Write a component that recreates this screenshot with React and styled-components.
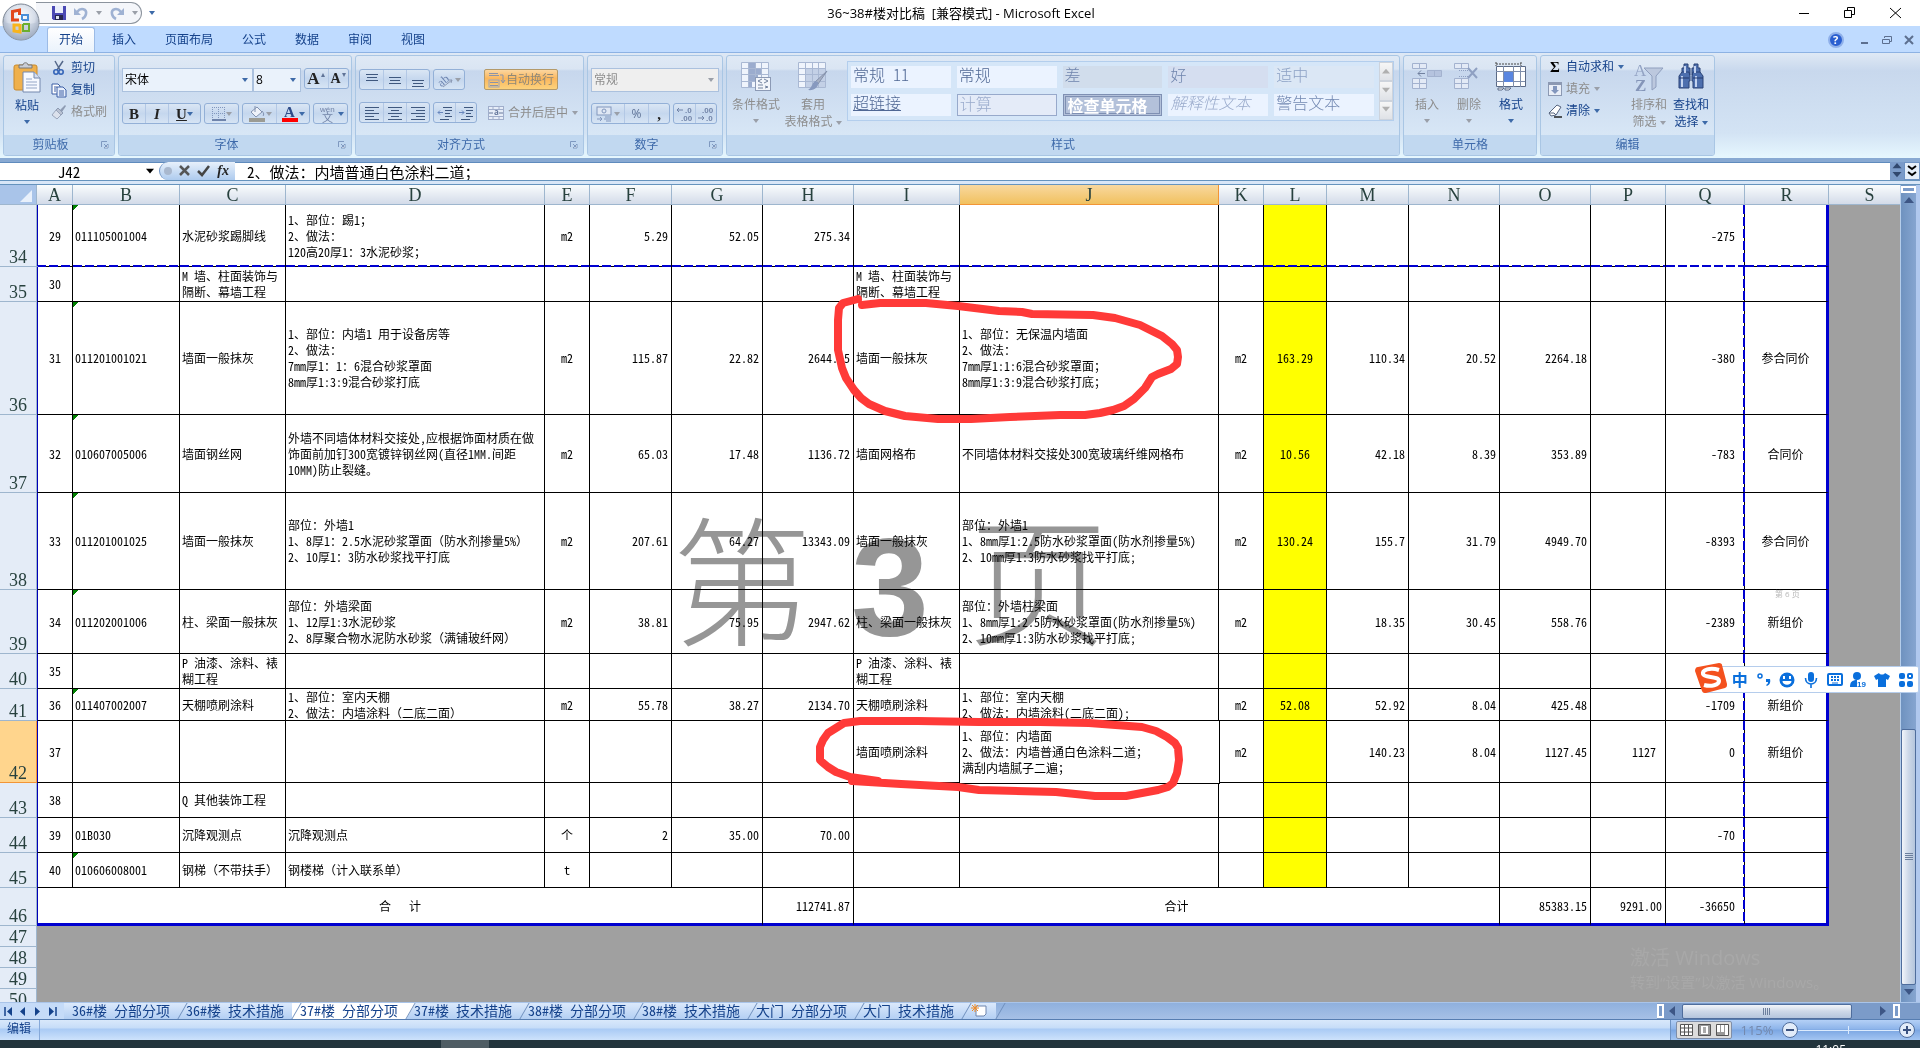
import React, { useState } from "react";
import styled, { createGlobalStyle, css } from "styled-components";

const GlobalStyle = createGlobalStyle`
  * {
    box-sizing: border-box;
  }

  body {
    margin: 0;
    overflow: hidden;
    background: #a0a0a0;
  }

  body, button, input, select {
    font-family: "Open Sans", "Noto Sans CJK SC", sans-serif;
    font-size: 12px;
    line-height: 16px;
  }

  button {
    margin: 0;
    padding: 0;
    border: 0;
    background: none;
    color: inherit;
    white-space: nowrap;
  }

  svg {
    display: block;
    flex: none;
    overflow: visible;
  }
`;

/* half width latin glyphs, two of them are as wide as one chinese glyph */
const gridFont = css`
  font-family: "Noto Sans CJK SC", sans-serif;
  font-feature-settings: "hwid";
  text-spacing-trim: space-all;
`;

/* ---------- sheet data ---------- */

const columns = [
  ["A", 36], ["B", 107], ["C", 106], ["D", 259], ["E", 45], ["F", 82],
  ["G", 91], ["H", 91], ["I", 106], ["J", 259], ["K", 45], ["L", 63],
  ["M", 82], ["N", 91], ["O", 91], ["P", 75], ["Q", 79], ["R", 84],
];

const align = {
  A: "center", B: "left", C: "left", D: "left", E: "center", I: "left",
  J: "left", K: "center", L: "center", R: "center",
};

const rows = [
  {
    n: 34, h: 62, mark: true, brk: true,
    c: {
      A: "29", B: "011105001004", C: "水泥砂浆踢脚线",
      D: "1、部位：踢1；\n2、做法：\n120高20厚1：3水泥砂浆；",
      E: "m2", F: "5.29", G: "52.05", H: "275.34", Q: "-275",
    },
  },
  {
    n: 35, h: 35,
    c: { A: "30", C: "M 墙、柱面装饰与\n隔断、幕墙工程", I: "M 墙、柱面装饰与\n隔断、幕墙工程" },
  },
  {
    n: 36, h: 113, mark: true,
    c: {
      A: "31", B: "011201001021", C: "墙面一般抹灰",
      D: "1、部位：内墙1 用于设备房等\n2、做法：\n7mm厚1：1：6混合砂浆罩面\n8mm厚1:3:9混合砂浆打底",
      E: "m2", F: "115.87", G: "22.82", H: "2644.15", I: "墙面一般抹灰",
      J: "1、部位：无保温内墙面\n2、做法：\n7mm厚1:1:6混合砂浆罩面；\n8mm厚1:3:9混合砂浆打底；",
      K: "m2", L: "163.29", M: "110.34", N: "20.52", O: "2264.18", Q: "-380", R: "参合同价",
    },
  },
  {
    n: 37, h: 78, mark: true,
    c: {
      A: "32", B: "010607005006", C: "墙面钢丝网",
      D: "外墙不同墙体材料交接处,应根据饰面材质在做\n饰面前加钉300宽镀锌钢丝网(直径1MM.间距\n10MM)防止裂缝。",
      E: "m2", F: "65.03", G: "17.48", H: "1136.72", I: "墙面网格布",
      J: "不同墙体材料交接处300宽玻璃纤维网格布",
      K: "m2", L: "10.56", M: "42.18", N: "8.39", O: "353.89", Q: "-783", R: "合同价",
    },
  },
  {
    n: 38, h: 97, mark: true,
    c: {
      A: "33", B: "011201001025", C: "墙面一般抹灰",
      D: "部位：外墙1\n1、8厚1：2.5水泥砂浆罩面（防水剂掺量5%）\n2、10厚1：3防水砂浆找平打底",
      E: "m2", F: "207.61", G: "64.27", H: "13343.09", I: "墙面一般抹灰",
      J: "部位：外墙1\n1、8mm厚1:2.5防水砂浆罩面(防水剂掺量5%)\n2、10mm厚1:3防水砂浆找平打底;",
      K: "m2", L: "130.24", M: "155.7", N: "31.79", O: "4949.70", Q: "-8393", R: "参合同价",
    },
  },
  {
    n: 39, h: 64, mark: true,
    c: {
      A: "34", B: "011202001006", C: "柱、梁面一般抹灰",
      D: "部位：外墙梁面\n1、12厚1:3水泥砂浆\n2、8厚聚合物水泥防水砂浆（满铺玻纤网）",
      E: "m2", F: "38.81", G: "75.95", H: "2947.62", I: "柱、梁面一般抹灰",
      J: "部位：外墙柱梁面\n1、8mm厚1:2.5防水砂浆罩面(防水剂掺量5%)\n2、10mm厚1:3防水砂浆找平打底;",
      K: "m2", M: "18.35", N: "30.45", O: "558.76", Q: "-2389", R: "新组价",
    },
  },
  {
    n: 40, h: 35,
    c: { A: "35", C: "P 油漆、涂料、裱\n糊工程", I: "P 油漆、涂料、裱\n糊工程" },
  },
  {
    n: 41, h: 32, mark: true,
    c: {
      A: "36", B: "011407002007", C: "天棚喷刷涂料",
      D: "1、部位：室内天棚\n2、做法：内墙涂料（二底二面）",
      E: "m2", F: "55.78", G: "38.27", H: "2134.70", I: "天棚喷刷涂料",
      J: "1、部位：室内天棚\n2、做法：内墙涂料(二底二面);",
      K: "m2", L: "52.08", M: "52.92", N: "8.04", O: "425.48", Q: "-1709", R: "新组价",
    },
  },
  {
    n: 42, h: 62, active: true,
    c: {
      A: "37", I: "墙面喷刷涂料",
      J: "1、部位：内墙面\n2、做法：内墙普通白色涂料二道；\n满刮内墙腻子二遍；",
      K: "m2", M: "140.23", N: "8.04", O: "1127.45", P: "1127", Q: "0", R: "新组价",
    },
  },
  { n: 43, h: 35, c: { A: "38", C: "Q 其他装饰工程" } },
  {
    n: 44, h: 35,
    c: { A: "39", B: "01B030", C: "沉降观测点", D: "沉降观测点", E: "个", F: "2", G: "35.00", H: "70.00", Q: "-70" },
  },
  {
    n: 45, h: 35, mark: true,
    c: { A: "40", B: "010606008001", C: "钢梯（不带扶手）", D: "钢楼梯（计入联系单）", E: "t" },
  },
];

const sheetTabs = [
  "36#楼 分部分项", "36#楼 技术措施", "37#楼 分部分项", "37#楼 技术措施",
  "38#楼 分部分项", "38#楼 技术措施", "大门 分部分项", "大门 技术措施",
];

const ribbonTabs = ["开始", "插入", "页面布局", "公式", "数据", "审阅", "视图"];

/* ---------- icons ---------- */

const BLUE = "#8297bd";
const INK = "#3f587e";

const OfficeLogo = () => (
  <svg width="38" height="38" viewBox="0 0 38 38">
    <defs>
      <radialGradient id="orb" cx="50%" cy="35%" r="65%">
        <stop offset="0" stopColor="#ffffff" />
        <stop offset="0.6" stopColor="#d5dce8" />
        <stop offset="1" stopColor="#8593ab" />
      </radialGradient>
    </defs>
    <circle cx="19" cy="19" r="18" fill="url(#orb)" stroke="#7d8794" />
    <path d="M1 19a18 18 0 0 0 36 0c-8 3-28 3-36 0z" fill="#b4bfd2" opacity="0.5" />
    <g fill="none" strokeWidth="3">
      <path d="M17 17h-6.500v-8.500l7-1.500v5" stroke="#e2471b" />
      <path d="M18 21v8l-6-1v-6h6z" stroke="#f9b41c" />
    </g>
    <g fill="none" strokeWidth="2">
      <path d="M20 17h6v-5h-6v5" stroke="#4a8fd8" />
      <path d="M21 21h6v7h-6v-7" stroke="#6cae2e" />
    </g>
  </svg>
);

const SaveIcon = () => (
  <svg width="14" height="14" viewBox="0 0 14 14">
    <path d="M0 0h14v14H1.500L0 12.500z" fill="#4b49b4" />
    <path d="M3 0h8v7H3z" fill="#e9edfb" />
    <path d="M3 9h8v5H3z" fill="#26264e" />
    <path d="M4 10h3v3H4z" fill="#dfe4f0" />
  </svg>
);

const UndoIcon = ({ flip }) => (
  <svg width="14" height="14" viewBox="0 0 14 14">
    <g transform={flip ? "translate(14 0) scale(-1 1)" : undefined}>
      <path d="M3 6c4-5 10-3 9 2-.5 2.500-2 4-4 5" fill="none" stroke="#9fb2d3" strokeWidth="2.600" />
      <path d="M0 2v7h7z" fill="#9fb2d3" />
    </g>
  </svg>
);

const PasteIcon = () => (
  <svg width="28" height="32" viewBox="0 0 28 32">
    <rect x="1" y="3" width="23" height="25" rx="2" fill="#efb04c" stroke="#c98a2c" />
    <path d="M6 6V3h4c0-3 5-3 5 0h4v3z" fill="#c9cdd6" stroke="#777" />
    <path d="M10 10h11l6 6v14H10z" fill="#f6f9ff" stroke="#7588ad" />
    <path d="M21 10v6h6" fill="#d4def0" stroke="#7588ad" />
    <path d="M13 17h6M13 20h11M13 23h11M13 26h11" stroke="#93a5c6" />
  </svg>
);

const CutIcon = () => (
  <svg width="16" height="16" viewBox="0 0 16 16">
    <path d="M4 1l5 9M12 1L6 10" stroke="#55688a" strokeWidth="1.500" fill="none" />
    <circle cx="5" cy="12" r="2.200" fill="none" stroke="#3565b8" strokeWidth="1.600" />
    <circle cx="10" cy="12" r="2.200" fill="none" stroke="#3565b8" strokeWidth="1.600" />
  </svg>
);

const CopyIcon = () => (
  <svg width="16" height="16" viewBox="0 0 16 16">
    <path d="M1 2h6l2 2v8H1z" fill="#fff" stroke="#3d5fa5" />
    <path d="M6 5h6l3 3v7H6z" fill="#e6eefc" stroke="#3d5fa5" />
    <path d="M8 9h5M8 11h5M8 13h5M3 5h3M3 7h2M3 9h2" stroke="#3d5fa5" />
  </svg>
);

const BrushIcon = () => (
  <svg width="16" height="16" viewBox="0 0 16 16">
    <path d="M14 1l1 1-4 6-2-2z" fill="#8e9bb3" />
    <path d="M7 4l5 5-2 2-5-5z" fill="#b8c1d2" stroke="#8e9bb3" />
    <path d="M5 6l5 5-4 4-5-4z" fill="#dbe1ec" stroke="#9aa6bc" />
  </svg>
);

/* text lines of the given widths, stacked from top */
const LinesIcon = ({ widths, side = "left", top = 2, gap = 3 }) => (
  <svg width="16" height="16" viewBox="0 0 16 16">
    {widths.map((w, i) => {
      const x = side === "left" ? 1 : side === "right" ? 15 - w : (16 - w) / 2;
      return <rect key={i} x={x} y={top + i * gap} width={w} height="1" fill={INK} />;
    })}
  </svg>
);

const OrientIcon = () => (
  <svg width="18" height="16" viewBox="0 0 18 16">
    <text x="1" y="12" fontSize="12" fill="#6d84b0" transform="rotate(-40 7 9)" fontFamily="Liberation Serif">ab</text>
    <path d="M6 15l9-7m0 0l-3 0m3 0l-1 3" stroke="#8d9bb5" fill="none" />
  </svg>
);

const IndentIcon = ({ out }) => (
  <svg width="16" height="16" viewBox="0 0 16 16">
    <path d="M6 2.500h9M8 5.500h7M8 8.500h5M8 11.500h7M3 14.500h9" stroke={INK} />
    <path d={out ? "M6 7.500H1m2-2L1 7.500l2 2" : "M1 7.500h5m-2-2l2 2-2 2"} stroke="#6786bd" fill="none" />
  </svg>
);

const WrapIcon = () => (
  <svg width="18" height="16" viewBox="0 0 18 16">
    <path d="M1 3.500h10M1 1.500h9M2 10.500h8M2 13.500h8" stroke="#8b93a8" />
    <rect x="1" y="8" width="10" height="7" fill="none" stroke="#9aa4bb" />
    <path d="M12 3h3v7m-2-2l2 3 2-3" stroke="#8b93a8" fill="none" />
  </svg>
);

const MergeIcon = () => (
  <svg width="16" height="14" viewBox="0 0 16 14">
    <rect x="0.500" y="0.500" width="15" height="13" fill="#e6edf8" stroke="#a0aecb" />
    <path d="M5 0v3M11 0v3M5 11v3M11 11v3M0 3.500h16M0 10.500h16" stroke="#a0aecb" />
    <text x="6" y="9" fontSize="8" fontWeight="bold" fill="#66789c">a</text>
    <path d="M1 7h4M11 7h4" stroke="#66789c" />
  </svg>
);

const BorderIcon = () => (
  <svg width="14" height="14" viewBox="0 0 14 14">
    <path d="M0.500 0v13M6.500 0v13M12.500 0v13M0 0.500h13M0 6.500h13" stroke={BLUE} strokeDasharray="1 1" />
    <path d="M0 13h14" stroke="#6f84ab" strokeWidth="2" />
  </svg>
);

const FillIcon = () => (
  <svg width="18" height="18" viewBox="0 0 18 18">
    <path d="M3 7l6-5 5 5-6 5z" fill="#eef2f9" stroke="#8292b0" />
    <path d="M7 1v6M14 6c2 2 2 4 1 5" stroke="#8292b0" fill="none" />
    <rect x="1" y="13" width="16" height="4" fill="#9b9b93" />
  </svg>
);

const FontColorIcon = () => (
  <svg width="18" height="18" viewBox="0 0 18 18">
    <text x="3" y="12" fontSize="15" fontWeight="bold" fill="#2f4c8a" fontFamily="Liberation Serif">A</text>
    <rect x="1" y="13" width="16" height="4" fill="#f00" />
  </svg>
);

const PinyinIcon = () => (
  <svg width="20" height="20" viewBox="0 0 20 20">
    <text x="2" y="8" fontSize="8" fill="#7284a8" fontFamily="Liberation Sans">wén</text>
    <text x="4" y="18" fontSize="11" fill="#7284a8" fontFamily="Noto Sans CJK SC">文</text>
  </svg>
);

const CoinIcon = () => (
  <svg width="18" height="16" viewBox="0 0 18 16">
    <rect x="1" y="1" width="14" height="8" fill="#dfe7f4" stroke={BLUE} />
    <circle cx="8" cy="5" r="2" fill="none" stroke={BLUE} />
    <path d="M9 11h6M8 13h7M10 15h5M1 13h5m-2-2l2 2-2 2" stroke={BLUE} fill="none" />
  </svg>
);

const DecimalIcon = ({ less }) => (
  <svg width="18" height="16" viewBox="0 0 18 16">
    <g fontSize="8" fontWeight="bold" fill="#7184a8" fontFamily="Liberation Sans">
      <text x={less ? 5 : 9} y="7">{less ? ".00" : ".0"}</text>
      <text x={less ? 9 : 5} y="15">{less ? ".0" : ".00"}</text>
    </g>
    <path d={less ? "M1 12h6m-2-2l2 2-2 2" : "M7 4H1m2-2L1 4l2 2"} stroke="#7184a8" fill="none" />
  </svg>
);

const CondIcon = () => (
  <svg width="30" height="30" viewBox="0 0 30 30">
    <path d="M0.500 0.500h27v25h-27z" fill="#eff4fc" stroke="#a9b8d3" />
    <path d="M7 1h7v6H7zM7 7h13v6H7zM7 13h10v6H7zM7 19h4v6H7z" fill="#9bacce" />
    <path d="M7.500 0v25M14.500 0v25M20.500 0v25M0 6.500h27M0 12.500h27M0 19.500h27" stroke="#a9b8d3" />
    <rect x="14.500" y="15.500" width="15" height="13" fill="#f3f6fb" stroke="#8c9ab5" />
    <path d="M21 17l-4 2 4 2M23 17l4 2-4 2M17 23h5M17 26h5M24 24l3 1-3 1" stroke="#73839f" fill="none" />
  </svg>
);

const TableFmtIcon = () => (
  <svg width="30" height="30" viewBox="0 0 30 30">
    <path d="M0.500 0.500h27v25h-27z" fill="#eff4fc" stroke="#a9b8d3" />
    <path d="M7 7h20v18H7z" fill="#c3d0e6" />
    <path d="M7.500 0v25M14.500 0v25M20.500 0v25M0 6.500h27M0 12.500h27M0 19.500h27" stroke="#a9b8d3" />
    <path d="M29 9l-9 13-3-2z" fill="#a8b2c6" stroke="#8491ab" />
    <path d="M20 20c1 5-4 9-10 8 4-2 4-7 7-9z" fill="#8799bf" />
  </svg>
);

const InsertIcon = ({ del }) => (
  <svg width="32" height="30" viewBox="0 0 32 30">
    <g fill="#e3eaf6" stroke="#a3b2cf">
      <path d="M1.500 1.500h14v5h-14zM1.500 16.500h14v10h-14zM1.500 21.500h14M8.500 1.500v5M8.500 16.500v10" />
      {!del && <path d="M16.500 8.500h14v6h-14zM23.500 8.500v6" fill="#b5c3de" />}
    </g>
    {del ? (
      <g stroke="#8fa0c2" fill="none">
        <path d="M6 8.500h12M6 14.500h12" strokeDasharray="1 1" />
        <path d="M15 6l9 10M24 6l-9 10" strokeWidth="2" />
      </g>
    ) : (
      <path d="M14 11.500H7m3-3l-3 3 3 3" stroke="#71819f" fill="none" />
    )}
  </svg>
);

const FormatIcon = () => (
  <svg width="32" height="30" viewBox="0 0 32 30">
    <path d="M1 0v4M26 0v4M1 2h25" stroke="#444" strokeDasharray="2 1" fill="none" />
    <path d="M1.500 4.500h29v20h-29z" fill="#fff" stroke="#5b6a86" />
    <path d="M8.500 4v21M18.500 4v21M25.500 4v21M1 9.500h29M1 19.500h29" stroke="#7f8eab" />
    <path d="M9 10h9v10H9z" fill="#5a86e0" />
    <path d="M3 26h6l-2 2H3zM10 26h6l-2 2h-4z" fill="#fff" stroke="#5b6a86" />
  </svg>
);

const FillDownIcon = () => (
  <svg width="14" height="16" viewBox="0 0 14 16">
    <rect x="0.500" y="1.500" width="13" height="13" fill="#e9eef7" stroke="#8c99b3" />
    <path d="M0 3h14" stroke="#8c99b3" strokeWidth="2" />
    <path d="M5 5h4v4h2l-4 4-4-4h2z" fill="#8296bd" />
  </svg>
);

const EraseIcon = () => (
  <svg width="14" height="16" viewBox="0 0 14 16">
    <path d="M9 2l4 2-5 8-5 1-2-3z" fill="#fff" stroke="#56647f" />
    <path d="M1 10l5 0 2 2" stroke="#56647f" fill="none" />
    <path d="M6 14h8" stroke="#222" strokeWidth="1.500" />
  </svg>
);

const SortIcon = () => (
  <svg width="30" height="30" viewBox="0 0 30 30">
    <text x="0" y="14" fontSize="17" fill="#93a3c4" fontFamily="Liberation Serif">A</text>
    <text x="1" y="29" fontSize="17" fontWeight="bold" fill="#8495b8" fontFamily="Liberation Serif">Z</text>
    <path d="M10 6h19l-7 8v11l-4 3V14z" fill="#bcc8de" stroke="#8f9fbe" />
  </svg>
);

const FindIcon = () => (
  <svg width="30" height="30" viewBox="0 0 30 30">
    <g fill="#4d6fae" stroke="#2a4377">
      <path d="M8 2h4v4h2v7H6V6h2zM18 2h4v4h2v7h-8V6h2z" />
      <path d="M3 14l3-4h7l1 4v5h-1v7H3zM27 14l-3-4h-7l-1 4v5h1v7h10z" />
    </g>
    <path d="M6 14v11M20 14v11M9 4v7M19 4v7" stroke="#c3d3f0" strokeWidth="2" />
    <path d="M3 16h10M17 16h10" stroke="#23396a" />
  </svg>
);

const LaunchIcon = () => (
  <svg width="8" height="8" viewBox="0 0 8 8">
    <path d="M0.500 6V0.500H6" stroke="#7f99c0" fill="none" />
    <path d="M3 3l3 3M7 3v4H3z" stroke="#7f99c0" fill="#fff" />
  </svg>
);

const Arrow = ({ dir = "left", color = "#45659b" }) => {
  const d = {
    left: "M7 0v10L1 5z", right: "M1 0v10l6-5z", up: "M0 7h10L5 1z", down: "M0 1h10L5 7z",
  }[dir];
  return (
    <svg width="10" height="10" viewBox="0 0 10 10">
      <path d={d} fill={color} />
    </svg>
  );
};

/* ---------- components ---------- */

const Drop = ({ on }) => <Caret $on={on} />;

const Group = ({ title, width, launch, children, pad }) => (
  <GroupBox $w={width}>
    <GroupBody $pad={pad}>{children}</GroupBody>
    <GroupTitle>
      <span>{title}</span>
      {launch && <button aria-label={`${title} 设置`}><LaunchIcon /></button>}
    </GroupTitle>
  </GroupBox>
);

const Pick = ({ label, value, width, off }) => (
  <PickWrap $w={width} $off={off}>
    <select aria-label={label} defaultValue={value} disabled={off}>
      <option>{value}</option>
    </select>
    <Drop on={!off} />
  </PickWrap>
);

const Ribbon = () => (
  <RibbonBar>
    <Group title="剪贴板" width={112} launch pad="1px 0 0 3px">
      <BigButton $on $w={40}>
        <PasteIcon />
        <span>粘贴</span>
        <Drop on />
      </BigButton>
      <Column>
        <SmallButton $on><CutIcon />剪切</SmallButton>
        <SmallButton $on><CopyIcon />复制</SmallButton>
        <SmallButton><BrushIcon />格式刷</SmallButton>
      </Column>
    </Group>

    <Group title="字体" width={234} launch pad="12px 3px 0">
      <Column $gap={11}>
        <ToolRow $h={24}>
          <Joined>
            <Pick label="字体" value="宋体" width={131} />
            <Pick label="字号" value="8" width={48} />
          </Joined>
          <Tools>
            <Tool $w={23} aria-label="增大字号"><Glyph $s={17}>A</Glyph><Tick>▴</Tick></Tool>
            <Tool $w={20} aria-label="减小字号"><Glyph $s={14}>A</Glyph><Tick>▾</Tick></Tool>
          </Tools>
        </ToolRow>
        <ToolRow>
          <Tools>
            <Tool $w={22}><Glyph $s={15}>B</Glyph></Tool>
            <Tool $w={23}><Glyph $s={15} $i>I</Glyph></Tool>
            <Tool $w={32}><Glyph $s={15} $u>U</Glyph><Drop on /></Tool>
          </Tools>
          <Tools>
            <Tool $w={33} aria-label="边框"><BorderIcon /><Drop /></Tool>
          </Tools>
          <Tools>
            <Tool $w={33} aria-label="填充颜色"><FillIcon /><Drop /></Tool>
            <Tool $w={33} aria-label="字体颜色"><FontColorIcon /><Drop on /></Tool>
          </Tools>
          <Tools>
            <Tool $w={33} aria-label="拼音"><PinyinIcon /><Drop on /></Tool>
          </Tools>
        </ToolRow>
      </Column>
    </Group>

    <Group title="对齐方式" width={229} launch pad="13px 3px 0">
      <Column $gap={12}>
        <ToolRow>
          <Tools>
            <Tool $w={23} aria-label="顶端对齐"><LinesIcon widths={[12, 10, 12]} side="center" top={2} /></Tool>
            <Tool $w={23} aria-label="垂直居中"><LinesIcon widths={[12, 10, 12]} side="center" top={5} /></Tool>
            <Tool $w={23} aria-label="底端对齐"><LinesIcon widths={[12, 10, 12]} side="center" top={8} /></Tool>
          </Tools>
          <Tools>
            <Tool $w={30} aria-label="方向"><OrientIcon /><Drop /></Tool>
          </Tools>
        </ToolRow>
        <ToolRow>
          <Tools>
            <Tool $w={23} aria-label="文本左对齐"><LinesIcon widths={[14, 9, 14, 9, 14]} /></Tool>
            <Tool $w={23} aria-label="居中"><LinesIcon widths={[14, 8, 14, 8, 14]} side="center" /></Tool>
            <Tool $w={23} aria-label="文本右对齐"><LinesIcon widths={[14, 9, 14, 9, 14]} side="right" /></Tool>
          </Tools>
          <Tools>
            <Tool $w={21} aria-label="减少缩进量"><IndentIcon out /></Tool>
            <Tool $w={21} aria-label="增加缩进量"><IndentIcon /></Tool>
          </Tools>
        </ToolRow>
      </Column>
      <Rule />
      <Column $gap={12}>
        <WrapButton><WrapIcon />自动换行</WrapButton>
        <SmallButton><MergeIcon />合并后居中<Drop /></SmallButton>
      </Column>
    </Group>

    <Group title="数字" width={136} launch pad="12px 3px 0">
      <Column $gap={11}>
        <ToolRow $h={24}>
          <Pick label="数字格式" value="常规" width={128} off />
        </ToolRow>
        <ToolRow>
          <Tools>
            <Tool $w={32} aria-label="会计数字格式"><CoinIcon /><Drop /></Tool>
            <Tool $w={24}>%</Tool>
            <Tool $w={21}><Glyph $s={15}>,</Glyph></Tool>
          </Tools>
          <Tools>
            <Tool $w={21} aria-label="增加小数位数"><DecimalIcon /></Tool>
            <Tool $w={21} aria-label="减少小数位数"><DecimalIcon less /></Tool>
          </Tools>
        </ToolRow>
      </Column>
    </Group>

    <Group title="样式" width={674} pad="0 5px 0 2px">
      <BigButton $w={54}>
        <CondIcon />
        <span>条件格式</span>
        <Drop />
      </BigButton>
      <BigButton $w={60}>
        <TableFmtIcon />
        <span>套用</span>
        <span>表格格式 <Drop /></span>
      </BigButton>
      <Gallery>
        <GalleryGrid>
          <Swatch $fg="#4f6794">常规 11</Swatch>
          <Swatch $fg="#4f6794">常规</Swatch>
          <Swatch $fg="#6f84ac" $bg="#d1ddec">差</Swatch>
          <Swatch $fg="#6f84ac" $bg="#d5def0">好</Swatch>
          <Swatch $fg="#8ba0c4" $bg="#dbe7f5">适中</Swatch>
          <Swatch $fg="#4f6794" $line>超链接</Swatch>
          <Swatch $fg="#9aabcc" $bg="#e4ebf8" $edge="1px solid #97a9cb">计算</Swatch>
          <Swatch $fg="#ffffff" $bg="#b3c1da" $edge="3px double #7f90b3" $bold>检查单元格</Swatch>
          <Swatch $fg="#9aabcc" $slant>解释性文本</Swatch>
          <Swatch $fg="#7288b2">警告文本</Swatch>
        </GalleryGrid>
        <GalleryScroll>
          <button aria-label="上一行"><Arrow dir="up" color="#b0b0b0" /></button>
          <button aria-label="下一行"><Arrow dir="down" color="#b0b0b0" /></button>
          <button aria-label="其他"><Arrow dir="down" color="#b0b0b0" /></button>
        </GalleryScroll>
      </Gallery>
    </Group>

    <Group title="单元格" width={134} pad="0 0 0 2px">
      <BigButton $w={42}><InsertIcon /><span>插入</span><Drop /></BigButton>
      <BigButton $w={42}><InsertIcon del /><span>删除</span><Drop /></BigButton>
      <BigButton $w={42} $on><FormatIcon /><span>格式</span><Drop on /></BigButton>
    </Group>

    <Group title="编辑" width={175} pad="0 0 0 3px">
      <Column>
        <SmallButton $on><Sigma>Σ</Sigma>自动求和<Drop on /></SmallButton>
        <SmallButton><FillDownIcon />填充<Drop /></SmallButton>
        <SmallButton $on><EraseIcon />清除<Drop on /></SmallButton>
      </Column>
      <BigButton $w={42}>
        <SortIcon />
        <span>排序和</span>
        <span>筛选 <Drop /></span>
      </BigButton>
      <BigButton $w={42} $on>
        <FindIcon />
        <span>查找和</span>
        <span>选择 <Drop on /></span>
      </BigButton>
    </Group>
  </RibbonBar>
);

/* brackets that are typed full width keep the full width glyph */
const withWide = (text = "") =>
  text.split(/([（）])/).map((part, i) => (i % 2 ? <Wide key={i}>{part}</Wide> : part));

const SheetRow = ({ row }) => (
  <tr>
    <RowHead scope="row" $h={row.h} $on={row.active}>{row.n}</RowHead>
    {columns.map(([name]) => (
      <Cell
        key={name}
        $col={name}
        $align={align[name] || "right"}
        $mark={row.mark && name === "B"}
        $brk={row.brk}
        $edit={row.active && name === "J"}
      >
        <CellText $h={row.h}>{withWide(row.c[name])}</CellText>
      </Cell>
    ))}
    <Blank />
  </tr>
);

const Sheet = () => (
  <SheetArea>
    <GridPane>
      <Table>
        <colgroup>
          <col style={{ width: 37 }} />
          {columns.map(([name, w]) => <col key={name} style={{ width: w }} />)}
          <col />
        </colgroup>
        <thead>
          <tr>
            <Corner aria-label="全选">
              <svg width="36" height="18" viewBox="0 0 36 18">
                <path d="M32 4v12H20z" fill="#e8f0fb" />
              </svg>
            </Corner>
            {columns.map(([name]) => (
              <ColHead key={name} scope="col" $on={name === "J"}>{name}</ColHead>
            ))}
            <ColHead scope="col" $open>S</ColHead>
          </tr>
        </thead>
        <tbody>
          {rows.map((row) => <SheetRow key={row.n} row={row} />)}
          <tr>
            <RowHead scope="row" $h={38}>46</RowHead>
            <Cell colSpan={7} $col="A" $align="center" $last><CellText $h={38}>合   计</CellText></Cell>
            <Cell $col="H" $align="right" $last><CellText $h={38}>112741.87</CellText></Cell>
            <Cell colSpan={6} $col="N" $align="center" $last><CellText $h={38}>合计</CellText></Cell>
            <Cell $col="O" $align="right" $last><CellText $h={38}>85383.15</CellText></Cell>
            <Cell $col="O" $align="right" $last><CellText $h={38}>9291.00</CellText></Cell>
            <Cell $col="Q" $align="right" $last><CellText $h={38}>-36650</CellText></Cell>
            <Cell $col="R" $align="center" $last />
            <Blank />
          </tr>
          {[47, 48, 49, 50].map((n) => (
            <tr key={n}>
              <RowHead scope="row" $h={21}>{n}</RowHead>
              <Blank colSpan={19} />
            </tr>
          ))}
        </tbody>
      </Table>
      <PageMark>
        <span>第</span>
        <b>3</b>
        <span>页</span>
      </PageMark>
      <TinyMark>第 6 页</TinyMark>
      <Activate>
        <strong>激活 Windows</strong>
        <span>转到“设置”以激活 Windows。</span>
      </Activate>
      <Ink />
    </GridPane>
    <VScroll>
      <SplitHandle />
      <Arrow dir="up" color="#3d5685" />
      <VTrack>
        <VThumb><i /><i /><i /><i /></VThumb>
      </VTrack>
      <Arrow dir="down" color="#3d5685" />
    </VScroll>
  </SheetArea>
);

/* freehand pen marks, drawn in window coordinates */
const Ink = () => (
  <InkLayer viewBox="0 185 1900 817">
    <polyline points="862,305 880,303 926,303 958,306 999,311 1022,312 1032,314 1093,315 1115,318 1140,325 1162,336 1172,344 1177,350 1178,357 1177,364 1171,369 1158,374 1152,377 1145,388 1134,399 1124,406 1113,410 1100,413 1085,415 1060,415 1010,417 971,419 938,419 905,416 885,411 869,404 861,398 854,390 846,378 842,368 838,350 838,320 839,308 843,303 858,299" />
    <polyline points="878,781 850,777 836,772 828,767 822,762 820,760 820,747 823,740 828,733 844,723 860,721 918,721 979,722 1040,722 1089,723 1142,727 1156,731 1167,737 1175,743 1178,748 1179,760 1177,773 1173,783 1168,787 1158,790 1126,796 1095,796 1056,792 979,790 958,787 901,784 852,781" />
  </InkLayer>
);

const ImeBar = () => (
  <Ime>
    <svg width="34" height="32" viewBox="0 0 34 32">
      <path d="M4 5L25 1c2 0 3 1 3 2l5 19c0 2 0 3-2 4L12 31c-2 0-3 0-4-2L1 9c0-2 1-4 3-4z" fill="#f4511e" />
      <path d="M25 8c-9-3-17 0-16 4 1 4 16 2 16 7 0 4-8 6-15 4" fill="none" stroke="#fff" strokeWidth="4" />
    </svg>
    <ImeButton>中</ImeButton>
    <ImeButton aria-label="标点">
      <svg width="16" height="18" viewBox="0 0 16 18">
        <circle cx="4" cy="5" r="2" fill="none" stroke="#0a6fdc" strokeWidth="1.500" />
        <path d="M10 8h4c1 4-1 6-3 7l-1-1c1-1 2-1 2-3h-2z" fill="#0a6fdc" />
      </svg>
    </ImeButton>
    <ImeButton aria-label="表情">
      <svg width="16" height="18" viewBox="0 0 16 18">
        <circle cx="8" cy="9" r="7.500" fill="#0a6fdc" />
        <path d="M5 5v3M11 5v3" stroke="#fff" strokeWidth="2" />
        <path d="M3.500 10h9c0 5-9 5-9 0z" fill="#fff" />
      </svg>
    </ImeButton>
    <ImeButton aria-label="语音">
      <svg width="16" height="18" viewBox="0 0 16 18">
        <rect x="5" y="1" width="6" height="10" rx="3" fill="#0a6fdc" />
        <path d="M2.500 7c0 8 11 8 11 0M8 13v4" stroke="#0a6fdc" strokeWidth="1.600" fill="none" />
      </svg>
    </ImeButton>
    <ImeButton aria-label="键盘">
      <svg width="16" height="18" viewBox="0 0 16 18">
        <rect x="1" y="3" width="14" height="11" rx="1" fill="none" stroke="#0a6fdc" strokeWidth="2" />
        <path d="M4 6h9M4 9h9" stroke="#0a6fdc" strokeWidth="2" strokeDasharray="2 1" />
        <path d="M5 12h6" stroke="#0a6fdc" />
      </svg>
    </ImeButton>
    <ImeButton aria-label="账户">
      <svg width="17" height="18" viewBox="0 0 17 18">
        <circle cx="7" cy="5" r="4" fill="#0a6fdc" />
        <path d="M0 16c0-5 2-7 7-7s7 3 7 7z" fill="#0a6fdc" />
        <rect x="7" y="9" width="10" height="8" fill="#fff" />
        <text x="7" y="16" fontSize="8" fontWeight="bold" fill="#0a6fdc" fontFamily="Liberation Sans">19</text>
      </svg>
    </ImeButton>
    <ImeButton aria-label="皮肤">
      <svg width="16" height="18" viewBox="0 0 16 18">
        <path d="M5 2c1 2 5 2 6 0l5 3-2 4-2-1v8H4V8L2 9 0 5z" fill="#0a6fdc" />
      </svg>
    </ImeButton>
    <ImeButton aria-label="工具箱">
      <svg width="14" height="14" viewBox="0 0 14 14">
        <rect x="0" y="0" width="6" height="6" rx="2" fill="#0a6fdc" />
        <rect x="9" y="1" width="4" height="4" rx="1" fill="none" stroke="#0a6fdc" strokeWidth="2" />
        <rect x="0" y="8" width="6" height="6" rx="2" fill="#0a6fdc" />
        <rect x="8" y="8" width="6" height="6" rx="2" fill="#0a6fdc" />
      </svg>
    </ImeButton>
  </Ime>
);

const App = () => {
  const [sheet, setSheet] = useState(2);
  const [formula, setFormula] = useState("2、做法：内墙普通白色涂料二道；");

  return (
    <Window>
      <GlobalStyle />
      <TitleBar>
        <QuickBar>
          <button aria-label="保存"><SaveIcon /></button>
          <button aria-label="撤消"><UndoIcon /></button>
          <Drop />
          <button aria-label="恢复"><UndoIcon flip /></button>
          <Drop />
        </QuickBar>
        <Drop on />
        <Title>36~38#楼对比稿&nbsp; [兼容模式] - Microsoft Excel</Title>
        <WindowButtons>
          <button aria-label="最小化"><svg width="10" height="12"><path d="M0 6.500h10" stroke="#000" /></svg></button>
          <button aria-label="还原">
            <svg width="11" height="12"><path d="M0.500 3.500h7v7h-7zM3.500 3V0.500h7v7H8" fill="none" stroke="#000" /></svg>
          </button>
          <button aria-label="关闭"><svg width="11" height="12"><path d="M0 1l11 10M11 1L0 11" stroke="#000" /></svg></button>
        </WindowButtons>
        <OfficeButton aria-label="Office 按钮"><OfficeLogo /></OfficeButton>
      </TitleBar>

      <TabStrip>
        {ribbonTabs.map((t, i) => <RibbonTab key={t} $on={i === 0}>{t}</RibbonTab>)}
        <BookButtons>
          <button aria-label="帮助">
            <svg width="16" height="16">
              <circle cx="8" cy="8" r="7" fill="#2a5fd0" stroke="#8fb0ea" strokeWidth="2" />
              <text x="5" y="12" fontSize="11" fontWeight="bold" fill="#fff">?</text>
            </svg>
          </button>
          <button aria-label="最小化工作簿"><svg width="10" height="12"><path d="M1 9h7" stroke="#5c6f8f" strokeWidth="2" /></svg></button>
          <button aria-label="还原工作簿">
            <svg width="10" height="12"><path d="M2.500 4V2.500h7v5H8M0.500 5.500h7v4h-7z" fill="none" stroke="#5c6f8f" /></svg>
          </button>
          <button aria-label="关闭工作簿"><svg width="10" height="12"><path d="M1 2l8 8M9 2l-8 8" stroke="#5c6f8f" strokeWidth="2" /></svg></button>
        </BookButtons>
      </TabStrip>

      <Ribbon />

      <FormulaBar>
        <NameBox>
          <input aria-label="名称框" defaultValue="J42" />
          <Arrow dir="down" color="#000" />
        </NameBox>
        <FormulaTools>
          <i />
          <button aria-label="取消"><svg width="11" height="12"><path d="M1 1l9 9M10 1l-9 9" stroke="#555" strokeWidth="2.500" /></svg></button>
          <button aria-label="输入"><svg width="13" height="12"><path d="M1 6l4 4 7-9" fill="none" stroke="#444" strokeWidth="2.500" /></svg></button>
          <button aria-label="插入函数"><Glyph $s={14} $i>fx</Glyph></button>
        </FormulaTools>
        <FormulaInput aria-label="编辑栏" value={formula} onChange={(e) => setFormula(e.target.value)} />
        <Stepper>
          <Arrow dir="up" color="#31486f" />
          <Arrow dir="down" color="#31486f" />
        </Stepper>
        <Expand aria-label="展开编辑栏">
          <svg width="10" height="12"><path d="M1 1l4 3 4-3M1 7l4 3 4-3" fill="none" stroke="#000" strokeWidth="2" /></svg>
        </Expand>
      </FormulaBar>

      <Sheet />

      <SheetBar>
        <SheetNav>
          <button aria-label="第一张"><svg width="9" height="9"><path d="M1 0v9" stroke="#15428b" strokeWidth="1.500" /><path d="M8 0v9L3 4.500z" fill="#15428b" /></svg></button>
          <button aria-label="上一张"><svg width="9" height="9"><path d="M6 0v9L1 4.500z" fill="#15428b" /></svg></button>
          <button aria-label="下一张"><svg width="9" height="9"><path d="M2 0v9l5-4.500z" fill="#15428b" /></svg></button>
          <button aria-label="最后一张"><svg width="9" height="9"><path d="M8 0v9" stroke="#15428b" strokeWidth="1.500" /><path d="M1 0v9l5-4.500z" fill="#15428b" /></svg></button>
        </SheetNav>
        <SheetTabs>
          {sheetTabs.map((t, i) => (
            <SheetTab key={t} $on={i === sheet} onClick={() => setSheet(i)}>{t}</SheetTab>
          ))}
          <SheetTab aria-label="插入工作表">
            <svg width="18" height="14">
              <path d="M6 3h10v8l-2 2H6z" fill="#fff" stroke="#6c84ad" />
              <path d="M5 1v8M1 5h8M2 2l6 6M8 2L2 8" stroke="#f08a24" />
            </svg>
          </SheetTab>
        </SheetTabs>
        <HScroll>
          <SplitHandle $v />
          <Arrow dir="left" color="#3d5685" />
          <HTrack>
            <HThumb><i /><i /><i /><i /></HThumb>
          </HTrack>
          <Arrow dir="right" color="#3d5685" />
          <SplitHandle $v />
        </HScroll>
      </SheetBar>

      <StatusBar>
        <Mode>编辑</Mode>
        <StatusTools>
          <ViewButtons>
            <button aria-label="普通">
              <svg width="13" height="12"><path d="M0.500 0.500h12v11h-12zM4.500 0v12M8.500 0v12M0 4h13M0 8h13" fill="#fff" stroke="#555" /></svg>
            </button>
            <button aria-label="页面布局">
              <svg width="13" height="12"><path d="M0.500 0.500h12v11h-12z" fill="#999" stroke="#555" /><path d="M3 2h7v8H3z" fill="#fff" /><path d="M5 4h3M5 6h3M5 8h3" stroke="#555" /></svg>
            </button>
            <button aria-label="分页预览">
              <svg width="13" height="12"><path d="M0.500 0.500h12v11h-12z" fill="#999" stroke="#555" /><path d="M1 1h3v7H1zM5 1h3v7H5zM9 1h3v10H9z" fill="#fff" /></svg>
            </button>
          </ViewButtons>
          <Zoom>115%</Zoom>
          <Round aria-label="缩小"><svg width="10" height="10"><path d="M1 5h8" stroke="#3a5280" strokeWidth="2" /></svg></Round>
          <ZoomSlider type="range" aria-label="显示比例" defaultValue={50} />
          <Round aria-label="放大"><svg width="10" height="10"><path d="M1 5h8M5 1v8" stroke="#3a5280" strokeWidth="2" /></svg></Round>
        </StatusTools>
      </StatusBar>

      <TaskBar>
        <TaskItem />
        <Clock>11:05</Clock>
      </TaskBar>

      <ImeBar />
    </Window>
  );
};

export default App;

/* ---------- window frame ---------- */

const Window = styled.div`
  position: relative;
  display: flex;
  flex-direction: column;
  height: 100vh;
  overflow: hidden;
  color: #15428b;
`;

const TitleBar = styled.header`
  position: relative;
  display: flex;
  align-items: center;
  flex: none;
  height: 26px;
  padding-left: 36px;
  background: #fff;
`;

const QuickBar = styled.div`
  display: flex;
  align-items: center;
  gap: 8px;
  width: 106px;
  height: 22px;
  margin-right: 7px;
  padding-left: 16px;
  border: 1px solid #8c949e;
  border-left: 0;
  border-radius: 0 11px 11px 0;
  background: #f4f6fa;
`;

const OfficeButton = styled.button`
  position: absolute;
  left: 2px;
  top: 3px;
  z-index: 2;
`;

const Title = styled.h1`
  flex: 1;
  margin: 0 12px 0 0;
  color: #000;
  font-size: 13px;
  font-weight: normal;
  text-align: center;
`;

const WindowButtons = styled.div`
  display: flex;
  gap: 35px;
  width: 141px;
  padding-left: 20px;
`;

const TabStrip = styled.nav`
  display: flex;
  flex: none;
  gap: 5px;
  height: 26px;
  padding: 1px 6px 0 47px;
  background: #bfdbff;
`;

const RibbonTab = styled.button`
  padding: 0 11px;
  border: 1px solid transparent;
  border-bottom: 0;
  border-radius: 3px 3px 0 0;
  ${(p) =>
    p.$on &&
    css`
      border-color: #9cbbe6;
      background: linear-gradient(#fff, #eaf3fc);
    `}
`;

const BookButtons = styled.div`
  display: flex;
  align-items: center;
  gap: 12px;
  margin-left: auto;

  button:first-child {
    margin-right: 4px;
  }
`;

/* ---------- ribbon ---------- */

const RibbonBar = styled.section`
  display: flex;
  flex: none;
  gap: 3px;
  height: 110px;
  padding: 2px 3px 0;
  border-top: 1px solid #8db2e3;
  border-bottom: 4px solid #88a9d2;
  background: linear-gradient(#dfe9f5, #c8d8ed 18px, #d3e3f4 80px, #e6f7fe);
`;

const GroupBox = styled.div`
  display: flex;
  flex-direction: column;
  flex: none;
  width: ${(p) => p.$w}px;
  height: 101px;
  border: 1px solid #a9c6e4;
  border-radius: 3px;
  overflow: hidden;
  background: linear-gradient(#dfe9f5, #dae5f3 13px, #c7d7ed 15px, #d8e7f6 80px);
`;

const GroupBody = styled.div`
  display: flex;
  flex: 1;
  align-items: flex-start;
  padding: ${(p) => p.$pad};
`;

const GroupTitle = styled.div`
  display: flex;
  align-items: center;
  height: 20px;
  padding: 0 5px;
  background: #c1d8f0;
  color: #3e6aaa;

  span {
    flex: 1;
    text-align: center;
  }

  button {
    margin-left: 9px;
  }
`;

const Column = styled.div`
  display: flex;
  flex-direction: column;
  align-items: flex-start;
  gap: ${(p) => p.$gap || 0}px;
`;

const Caret = styled.i`
  display: inline-block;
  flex: none;
  width: 0;
  height: 0;
  border: 3px solid transparent;
  border-top: 4px solid ${(p) => (p.$on ? "#3d6aa8" : "#9a9fa8")};
  border-bottom: 0;
  vertical-align: middle;
`;

const BigButton = styled.button`
  display: flex;
  flex-direction: column;
  align-items: center;
  width: ${(p) => p.$w}px;
  padding-top: 5px;
  color: ${(p) => (p.$on ? "#15428b" : "#8d8d8d")};
  line-height: 17px;

  svg {
    height: 32px;
    margin-bottom: 3px;
  }

  > ${Caret} {
    margin-top: 6px;
  }
`;

const SmallButton = styled.button`
  display: flex;
  align-items: center;
  gap: 4px;
  height: 22px;
  padding: 0 4px;
  color: ${(p) => (p.$on ? "#15428b" : "#8d8d8d")};
`;

const WrapButton = styled(SmallButton)`
  height: 21px;
  padding: 0 3px;
  gap: 0;
  border: 1px solid #b49a6a;
  border-radius: 2px;
  background: linear-gradient(#fbd6a0, #fbb75d 45%, #fcd27c);
  color: #8f8878;
`;

const Sigma = styled.b`
  width: 14px;
  color: #000;
  font-family: "Liberation Serif", serif;
  font-size: 15px;
`;

const ToolRow = styled.div`
  display: flex;
  align-items: flex-start;
  gap: 3px;
  height: ${(p) => p.$h || 21}px;
`;

const Joined = styled.div`
  display: flex;
`;

const Tools = styled.div`
  display: flex;
  height: 21px;
  border: 1px solid #93b0d7;
  border-radius: 3px;
  background: linear-gradient(#dae6f4, #c5d7ee 50%, #d6e4f4);
`;

const Tool = styled.button`
  display: flex;
  align-items: center;
  justify-content: center;
  width: ${(p) => p.$w}px;
  color: #5f7397;

  & + & {
    border-left: 1px solid #b3c8e5;
  }
`;

const Glyph = styled.b`
  color: #222;
  font-family: "Liberation Serif", serif;
  font-size: ${(p) => p.$s}px;
  font-style: ${(p) => (p.$i ? "italic" : "normal")};
  text-decoration: ${(p) => (p.$u ? "underline" : "none")};
`;

const Tick = styled.span`
  align-self: flex-start;
  width: 6px;
  font-size: 8px;
  line-height: 10px;
`;

const Rule = styled.div`
  width: 1px;
  height: 54px;
  margin: 0 3px 0 4px;
  background: #9ebbe0;
`;

const PickWrap = styled.div`
  display: grid;
  align-items: center;
  width: ${(p) => p.$w}px;
  height: 24px;
  border: 1px solid #abc1de;
  background: ${(p) => (p.$off ? "#efefef" : "#eaf2fb")};

  select {
    grid-area: 1 / 1;
    width: 100%;
    padding: 0 2px;
    border: 0;
    background: none;
    appearance: none;
    color: ${(p) => (p.$off ? "#8d8d8d" : "#000")};
    opacity: 1;
  }

  ${Caret} {
    grid-area: 1 / 1;
    justify-self: end;
    margin-right: 4px;
  }
`;

const Gallery = styled.div`
  display: flex;
  flex: 1;
  gap: 3px;
  height: 60px;
  margin: 5px 0 0 4px;
  border: 1px solid #b3ceed;
  background: #d5e6f8;
`;

const GalleryGrid = styled.div`
  display: grid;
  flex: 1;
  grid-template-columns: repeat(5, 1fr);
  grid-auto-rows: 22px;
  gap: 6px;
  padding: 4px 2px 0 3px;
`;

const Swatch = styled.button`
  ${gridFont}
  padding: 0 2px 6px;
  border: ${(p) => p.$edge || "0"};
  background: ${(p) => p.$bg || "#ebf3ff"};
  color: ${(p) => p.$fg};
  font-size: 16px;
  font-weight: ${(p) => (p.$bold ? "bold" : 300)};
  font-style: ${(p) => (p.$slant ? "italic" : "normal")};
  line-height: 16px;
  text-align: left;
  text-decoration: ${(p) => (p.$line ? "underline" : "none")};
`;

const GalleryScroll = styled.div`
  display: flex;
  flex-direction: column;
  width: 14px;

  button {
    display: flex;
    flex: 1;
    align-items: center;
    justify-content: center;
    border: 1px solid #cdd3dc;
    background: linear-gradient(#f6f6f6, #dfe2e7);
  }

  svg {
    width: 8px;
  }
`;

/* ---------- formula bar ---------- */

const FormulaBar = styled.div`
  display: flex;
  flex: none;
  height: 23px;
  padding-bottom: 3px;
  border-bottom: 1px solid #6593bd;
  background: linear-gradient(#5f8bbd 1px, #fff 1px, #fff 18px, #6593bd 18px, #6593bd 19px, #d8e6f7 19px);
`;

const NameBox = styled.div`
  display: flex;
  align-items: center;
  width: 159px;
  padding-right: 5px;

  input {
    ${gridFont}
    flex: 1;
    min-width: 0;
    height: 18px;
    padding: 0 8px 0 0;
    border: 0;
    background: none;
    font-size: 15px;
    text-align: center;
  }

  svg {
    width: 8px;
  }
`;

const FormulaTools = styled.div`
  display: flex;
  align-items: center;
  justify-content: space-between;
  width: 76px;
  height: 18px;
  padding: 0 6px 0 4px;
  border-radius: 9px 0 0 9px;
  border-left: 1px solid #6f93c3;
  background: linear-gradient(#e7f0fb, #aecbee);

  i {
    width: 8px;
    height: 8px;
    border-radius: 50%;
    background: #a9b8ce;
  }
`;

const FormulaInput = styled.input`
  ${gridFont}
  flex: 1;
  min-width: 0;
  height: 18px;
  padding: 0 0 0 12px;
  border: 0;
  background: none;
  color: #000;
  font-size: 15px;
`;

const Stepper = styled.div`
  display: flex;
  flex-direction: column;
  align-items: center;
  width: 14px;
  height: 18px;
  background: #7b9bc9;

  svg {
    height: 9px;
  }
`;

const Expand = styled.button`
  display: flex;
  align-items: center;
  justify-content: center;
  width: 16px;
  height: 18px;
  border: 1px solid #6f93c3;
  background: #e6effa;
`;

/* ---------- grid ---------- */

const SheetArea = styled.main`
  display: flex;
  flex: 1;
  min-height: 0;
`;

const GridPane = styled.div`
  position: relative;
  flex: 1;
  min-width: 0;
  overflow: hidden;
  background: #a0a0a0;
`;

const Table = styled.table`
  width: 100%;
  table-layout: fixed;
  border-collapse: separate;
  border-spacing: 0;
`;

const headFont = css`
  color: #27413e;
  font-family: "Liberation Serif", serif;
  font-size: 18px;
  font-weight: normal;
  line-height: 18px;
`;

const Corner = styled.th`
  height: 20px;
  padding: 0;
  border: solid #9eb6ce;
  border-width: 0 1px 1px 0;
  background: #a9c4e9;
`;

const ColHead = styled.th`
  ${headFont}
  height: 20px;
  padding: 1px 0 0 ${(p) => (p.$open ? 10 : 0)}px;
  border: solid ${(p) => (p.$on ? "#f29536" : "#9eb6ce")};
  border-width: 0 ${(p) => (p.$open ? 0 : 1)}px 1px 0;
  background: ${(p) => (p.$on ? "linear-gradient(#f8d89f, #f1c15f)" : "linear-gradient(#f9fcfd, #d3dbe9)")};
`;

const RowHead = styled.th`
  ${headFont}
  height: ${(p) => p.$h}px;
  padding: 0;
  border: solid ${(p) => (p.$on ? "#f29536" : "#9eb6ce")};
  border-width: 0 1px 1px 0;
  background: ${(p) => (p.$on ? "#ffd58d" : "#e4ecf7")};
  vertical-align: bottom;
`;

const dash = (deg) => `repeating-linear-gradient(${deg}deg, #0000d0 0 9px, transparent 9px 12px)`;

const Cell = styled.td`
  ${gridFont}
  padding: 0 ${(p) => (p.$align === "right" ? (/[PQ]/.test(p.$col) ? 9 : 3) : 0)}px 0
    ${(p) => (p.$align === "left" ? 2 : 0)}px;
  border: solid #000;
  border-width: 0 1px 1px 0;
  background-color: ${(p) => (p.$col === "L" ? "#ff0" : "#fff")};
  background-origin: border-box;
  background-repeat: no-repeat;
  color: #000;
  font-size: 12px;
  line-height: 16px;
  text-align: ${(p) => p.$align};
  vertical-align: middle;
  white-space: pre;

  ${(p) => p.$mark && css`
    background-image: linear-gradient(135deg, #008000 4px, transparent 4px);
    background-size: 6px 6px;
  `}

  ${(p) => p.$brk && css`
    border-bottom-color: transparent;
    background-image: ${p.$mark ? "linear-gradient(135deg, #008000 4px, transparent 4px)," : ""} ${dash(90)}, linear-gradient(#000, #000);
    background-size: ${p.$mark ? "6px 6px," : ""} 100% 2px, 100% 1px;
    background-position: ${p.$mark ? "left top," : ""} left bottom, left bottom;
  `}

  ${(p) => p.$col === "A" && css`
    border-left: 1px solid #0000b8;
  `}

  ${(p) => p.$col === "Q" && css`
    border-right-color: transparent;
    background-image: ${dash(180)}, linear-gradient(#000, #000) ${p.$brk ? `, ${dash(90)}` : ""};
    background-size: 2px 100%, 1px 100%, 100% 2px;
    background-position: right top, right top, left bottom;
  `}

  ${(p) => p.$col === "R" && css`
    border-right: 3px solid #0000d0;
  `}

  ${(p) => p.$last && css`
    border-bottom: 3px solid #0000d0;
  `}

  ${(p) => p.$edit && css`
    outline: 1px solid #000;
    border-color: #fff;
  `}
`;

const CellText = styled.div`
  max-height: ${(p) => p.$h - 1}px;
  overflow: hidden;
`;

const Wide = styled.span`
  font-feature-settings: normal;
`;

const Blank = styled.td`
  padding: 0;
`;

const PageMark = styled.div`
  position: absolute;
  left: 672px;
  top: 309px;
  display: flex;
  align-items: baseline;
  gap: 39px;
  color: #969696;
  font-family: "Liberation Sans", sans-serif;
  font-size: 140px;
  line-height: 160px;
  mix-blend-mode: multiply;
  pointer-events: none;

  span {
    font-family: "Noto Sans CJK SC", sans-serif;
    font-weight: 300;
  }
`;

const TinyMark = styled.div`
  position: absolute;
  left: 1775px;
  top: 404px;
  color: #b8b8b8;
  font-size: 8px;
  line-height: 10px;
  pointer-events: none;
`;

const Activate = styled.div`
  position: absolute;
  right: 74px;
  bottom: 10px;
  display: flex;
  flex-direction: column;
  width: 196px;
  color: #a8a8a8;
  font-size: 15px;
  line-height: 20px;
  white-space: nowrap;
  pointer-events: none;

  strong {
    font-size: 20px;
    font-weight: normal;
    line-height: 28px;
  }
`;

const InkLayer = styled.svg`
  position: absolute;
  left: 0;
  top: 0;
  width: 1900px;
  height: 817px;
  pointer-events: none;

  polyline {
    fill: none;
    stroke: #ff3a38;
    stroke-width: 8;
    stroke-linecap: round;
    stroke-linejoin: round;
  }
`;

/* ---------- scroll bars ---------- */

const VScroll = styled.div`
  display: flex;
  flex-direction: column;
  align-items: center;
  gap: 3px;
  width: 20px;
  padding: 1px 4px 4px 0;
  border-left: 1px solid #b5cdea;
  background: linear-gradient(90deg, #6f92bf, #86a5d0 15px, #b0c8ee 15px);
`;

const SplitHandle = styled.div`
  flex: none;
  width: ${(p) => (p.$v ? "7px" : "15px")};
  height: ${(p) => (p.$v ? "14px" : "7px")};
  border: 2px solid #fff;
  background: #7b9bc9;
`;

const VTrack = styled.div`
  display: flex;
  flex: 1;
  flex-direction: column;
  justify-content: flex-end;
  width: 100%;
`;

const VThumb = styled.div`
  display: flex;
  flex-direction: column;
  align-items: center;
  justify-content: center;
  gap: 1px;
  height: 33%;
  border: 1px solid #4f6d9c;
  border-radius: 2px;
  background: linear-gradient(90deg, #f2f5fa, #cdd8e8 50%, #b4c5dd);

  i {
    width: 8px;
    height: 1px;
    background: #6c7f9d;
  }
`;

const HScroll = styled.div`
  display: flex;
  align-items: center;
  gap: 4px;
  width: 263px;
  padding-right: 20px;
  background: #7b9bc9;
`;

const HTrack = styled.div`
  flex: 1;
  height: 15px;
`;

const HThumb = styled.div`
  display: flex;
  align-items: center;
  justify-content: center;
  gap: 1px;
  width: 88%;
  height: 15px;
  border: 1px solid #4f6d9c;
  border-radius: 2px;
  background: linear-gradient(#f2f5fa, #cdd8e8 50%, #b4c5dd);

  i {
    width: 1px;
    height: 7px;
    background: #6c7f9d;
  }
`;

/* ---------- bottom bars ---------- */

const SheetBar = styled.div`
  display: flex;
  flex: none;
  height: 17px;
  border-top: 1px solid #a9c4e9;
  background: linear-gradient(#8fb0dd, #a6c0e6);
`;

const SheetNav = styled.div`
  display: flex;
  align-items: center;
  justify-content: space-between;
  width: 64px;
  padding: 0 7px 0 4px;
  background: #c5dbf8;
`;

const SheetTabs = styled.div`
  display: flex;
  flex: 1;
`;

const SheetTab = styled.button`
  ${gridFont}
  position: relative;
  padding: 0 8px 2px;
  background: ${(p) => (p.$on ? "#fff" : "linear-gradient(#dbe9fb, #b3cff3)")};
  font-size: 14px;
  line-height: 14px;

  /* slanted right edge that lies over the next tab */
  &::after {
    content: "";
    position: absolute;
    z-index: 1;
    top: 0;
    right: -5px;
    width: 10px;
    height: 16px;
    border-right: 1px solid #6f8fbd;
    background: ${(p) => (p.$on ? "#fff" : "transparent")};
    transform: skewX(-30deg);
  }
`;

const StatusBar = styled.footer`
  display: flex;
  flex: none;
  height: 21px;
  border-top: 1px solid #567db1;
  background: linear-gradient(#d9e8fb, #c6dcf8 8px, #a9caf5 9px, #cde2fb);
`;

const Mode = styled.div`
  width: 40px;
  padding-left: 7px;
  border-right: 1px solid #86a9d9;
  line-height: 18px;
`;

const StatusTools = styled.div`
  display: flex;
  align-items: center;
  width: 250px;
  margin-left: auto;
  padding: 0 5px;
  border-left: 1px solid #6f93c3;
  background: linear-gradient(#b4d0f6, #8db4ea 9px, #7ba6e2 10px, #a3c5f2);
`;

const ViewButtons = styled.div`
  display: flex;
  width: 56px;
  height: 18px;
  border: 1px solid #7f8ea8;
  border-radius: 2px;
  background: #dcdcdc;

  button {
    display: flex;
    flex: 1;
    align-items: center;
    justify-content: center;
  }
`;

const Zoom = styled.span`
  width: 50px;
  color: #7489ad;
  font-size: 13px;
  text-align: center;
`;

const Round = styled.button`
  display: flex;
  align-items: center;
  justify-content: center;
  width: 16px;
  height: 16px;
  border: 1px solid #4f6d9c;
  border-radius: 50%;
  background: #e2ecf9;
`;

const ZoomSlider = styled.input`
  flex: 1;
  min-width: 0;
  height: 16px;
  margin: 0;
  appearance: none;
  background: linear-gradient(#dcebfd, #dcebfd) center / 100% 1px no-repeat;

  &::-webkit-slider-thumb {
    appearance: none;
    width: 1px;
    height: 8px;
    background: #dcebfd;
  }
`;

const TaskBar = styled.div`
  display: flex;
  justify-content: space-between;
  flex: none;
  height: 8px;
  padding: 0 74px 0 441px;
  overflow: hidden;
  background: #22343c;
`;

const TaskItem = styled.div`
  width: 48px;
  background: #4f5d64;
`;

const Clock = styled.span`
  padding-top: 2px;
  color: #fff;
`;

/* ---------- floating input method bar ---------- */

const Ime = styled.div`
  position: absolute;
  right: 1px;
  top: 666px;
  z-index: 3;
  display: flex;
  align-items: center;
  width: 216px;
  height: 27px;
  border: 1px solid #b5cdec;
  border-radius: 2px;
  background: #fff;

  > svg {
    margin: 0 0 4px -10px;
  }
`;

const ImeButton = styled.button`
  display: flex;
  flex: 1;
  align-items: center;
  justify-content: center;
  color: #0a6fdc;
  font-size: 16px;
  font-weight: bold;
`;
